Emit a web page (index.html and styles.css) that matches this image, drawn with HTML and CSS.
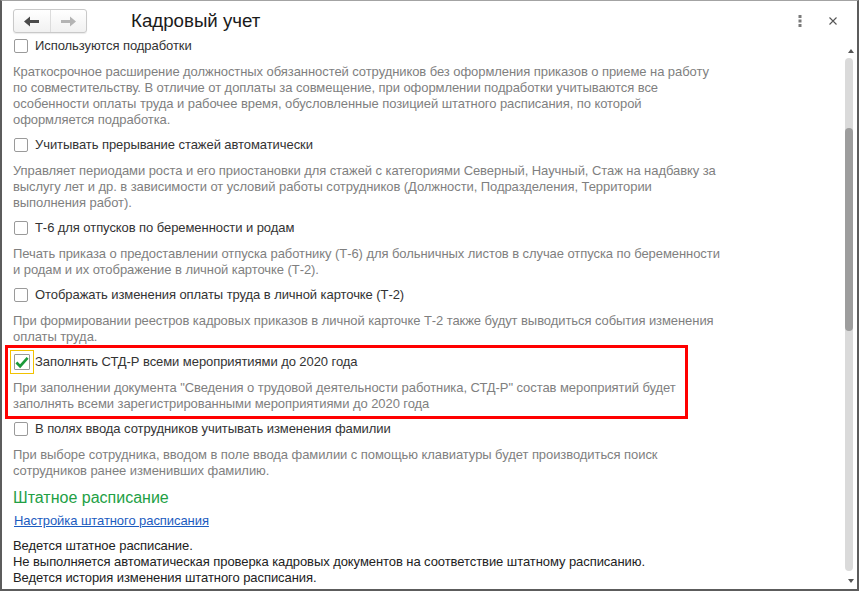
FILE: index.html
```html
<!DOCTYPE html>
<html lang="ru">
<head>
<meta charset="utf-8">
<title>Кадровый учет</title>
<link rel="stylesheet" href="styles.css">
</head>
<body>
<div class="window">
  <header class="titlebar">
    <div class="nav">
      <button class="nav-btn back" type="button" aria-label="Назад">
        <svg width="15" height="11" viewBox="0 0 15 11"><path d="M0 5.5 L6 0.5 V4 H15 V7 H6 V10.5 Z" fill="#4a4a4a"/></svg>
      </button>
      <button class="nav-btn fwd" type="button" aria-label="Вперед">
        <svg width="15" height="11" viewBox="0 0 15 11"><path d="M15 5.5 L9 0.5 V4 H0 V7 H9 V10.5 Z" fill="#b4b4b4"/></svg>
      </button>
    </div>
    <h1 class="title">Кадровый учет</h1>
    <div class="tools">
      <span class="more" aria-label="Еще">
        <svg width="4" height="12" viewBox="0 0 4 12"><rect x="0.5" y="0" width="3" height="3" fill="#7a7a7a"/><rect x="0.5" y="4.5" width="3" height="3" fill="#7a7a7a"/><rect x="0.5" y="9" width="3" height="3" fill="#7a7a7a"/></svg>
      </span>
      <span class="close" aria-label="Закрыть">
        <svg width="8" height="8" viewBox="0 0 8 8"><path d="M0.5 0.5 L7.5 7.5 M7.5 0.5 L0.5 7.5" stroke="#555" stroke-width="1.1"/></svg>
      </span>
    </div>
  </header>

  <div class="body">
    <div class="content">
      <section class="option">
        <label class="check-row"><span class="box"></span><span>Используются подработки</span></label>
        <p class="desc">Краткосрочное расширение должностных обязанностей сотрудников без оформления приказов о приеме на работу<br>по совместительству. В отличие от доплаты за совмещение, при оформлении подработки учитываются все<br>особенности оплаты труда и рабочее время, обусловленные позицией штатного расписания, по которой<br>оформляется подработка.</p>
      </section>

      <section class="option">
        <label class="check-row"><span class="box"></span><span>Учитывать прерывание стажей автоматически</span></label>
        <p class="desc">Управляет периодами роста и его приостановки для стажей с категориями Северный, Научный, Стаж на надбавку за<br>выслугу лет и др. в зависимости от условий работы сотрудников (Должности, Подразделения, Территории<br>выполнения работ).</p>
      </section>

      <section class="option">
        <label class="check-row"><span class="box"></span><span>Т-6 для отпусков по беременности и родам</span></label>
        <p class="desc">Печать приказа о предоставлении отпуска работнику (Т-6) для больничных листов в случае отпуска по беременности<br>и родам и их отображение в личной карточке (Т-2).</p>
      </section>

      <section class="option">
        <label class="check-row"><span class="box"></span><span>Отображать изменения оплаты труда в личной карточке (Т-2)</span></label>
        <p class="desc">При формировании реестров кадровых приказов в личной карточке Т-2 также будут выводиться события изменения<br>оплаты труда.</p>
      </section>

      <section class="option highlighted">
        <span class="annotation"></span>
        <label class="check-row"><span class="box checked focused"><svg width="15" height="13" viewBox="0 0 15 13"><path d="M1.5 6.5 L5.5 10.5 L13.5 1.5" fill="none" stroke="#1b9a3a" stroke-width="2.8"/></svg></span><span>Заполнять СТД-Р всеми мероприятиями до 2020 года</span></label>
        <p class="desc">При заполнении документа "Сведения о трудовой деятельности работника, СТД-Р" состав мероприятий будет<br>заполнять всеми зарегистрированными мероприятиями до 2020 года</p>
      </section>

      <section class="option">
        <label class="check-row"><span class="box"></span><span>В полях ввода сотрудников учитывать изменения фамилии</span></label>
        <p class="desc">При выборе сотрудника, вводом в поле ввода фамилии с помощью клавиатуры будет производиться поиск<br>сотрудников ранее изменивших фамилию.</p>
      </section>

      <h2 class="group-title">Штатное расписание</h2>
      <a class="link" href="#">Настройка штатного расписания</a>
      <p class="info">Ведется штатное расписание.<br>Не выполняется автоматическая проверка кадровых документов на соответствие штатному расписанию.<br>Ведется история изменения штатного расписания.<br>Используется несколько ставок в позиции штатного расписания.</p>
    </div>

    <div class="scrollbar">
      <span class="arrow up"></span>
      <div class="track"><div class="thumb"></div></div>
      <span class="arrow down"></span>
    </div>
  </div>
</div>
</body>
</html>
```

FILE: styles.css
```css
* { box-sizing: border-box; }

html, body {
  margin: 0;
  padding: 0;
  background: #ffffff;
}

body {
  font-family: "Liberation Sans", Arial, sans-serif;
  font-size: 13px;
  color: #333333;
}

.window {
  width: 859px;
  height: 591px;
  display: flex;
  flex-direction: column;
  background: #ffffff;
  border-top: 1px solid #a3a3a3;
  border-left: 2px solid #5c5c5c;
  border-right: 2px solid #5c5c5c;
  border-bottom: 2px solid #5c5c5c;
  overflow: hidden;
}

/* ---------- title bar ---------- */
.titlebar {
  height: 36px;
  flex: none;
  display: flex;
  align-items: flex-start;
  padding: 8px 0 0 11px;
}

.nav {
  display: flex;
  width: 74px;
  height: 24px;
  border: 1px solid #c9c9c9;
  border-radius: 3px;
  background: linear-gradient(#ffffff, #f1f1f1);
  box-shadow: 0 1px 1px rgba(0,0,0,0.08);
}

.nav-btn {
  flex: 1;
  margin: 0;
  padding: 0;
  border: none;
  background: transparent;
  display: flex;
  align-items: center;
  justify-content: center;
}

.nav-btn.back {
  border-right: 1px solid #dcdcdc;
}

.title {
  margin: 0 0 0 44px;
  font-family: "Liberation Sans", Arial, sans-serif;
  font-size: 18.7px;
  font-weight: normal;
  line-height: 24px;
  color: #1a1a1a;
}

.tools {
  margin-left: auto;
  display: flex;
  align-items: center;
  height: 24px;
  padding-right: 20px;
}

.more {
  display: flex;
  margin-right: 27px;
}

.close {
  display: flex;
}

/* ---------- body ---------- */
.body {
  flex: 1;
  display: flex;
  min-height: 0;
}

.content {
  flex: 1;
  overflow: hidden;
  padding: 1px 0 0 11px;
  letter-spacing: -0.07px;
}

.option {
  position: relative;
  margin-bottom: 9px;
}

.check-row {
  display: flex;
  align-items: center;
  height: 16px;
  line-height: 16px;
  color: #333333;
}

.box {
  width: 14px;
  height: 14px;
  margin: 0 7px 0 1px;
  border: 1px solid #9a9a9a;
  border-radius: 2px;
  background: #ffffff;
  flex: none;
  position: relative;
  display: flex;
  align-items: center;
  justify-content: center;
}

.box.checked {
  width: 16px;
  height: 16px;
  margin-right: 5px;
  border-radius: 1px;
}

.box.focused::after {
  content: "";
  position: absolute;
  left: -5px;
  top: -5px;
  right: -5px;
  bottom: -5px;
  border: 1px solid #f2c200;
}

.desc {
  margin: 10px 0 0 0;
  line-height: 16px;
  color: #7f7f7f;
  white-space: nowrap;
}

.annotation {
  position: absolute;
  left: -8px;
  top: -9px;
  width: 683px;
  height: 74px;
  border: 3px solid #ff0000;
  pointer-events: none;
}

.group-title {
  margin: 0;
  font-size: 16px;
  font-weight: normal;
  line-height: 20px;
  color: #22a045;
  letter-spacing: 0;
}

.link {
  display: inline-block;
  margin: 5px 0 0 1px;
  line-height: 16px;
  color: #1c5cc0;
  text-decoration: underline;
}

.info {
  margin: 9px 0 0 0;
  line-height: 16px;
  color: #222222;
  white-space: nowrap;
}

/* ---------- scrollbar ---------- */
.scrollbar {
  width: 12px;
  flex: none;
  display: flex;
  flex-direction: column;
  align-items: flex-start;
  padding: 12px 0 0 0;
}

.arrow {
  width: 0;
  height: 0;
  margin-left: 3px;
  border-left: 3px solid transparent;
  border-right: 3px solid transparent;
}

.arrow.up {
  border-bottom: 4px solid #555555;
}

.arrow.down {
  border-top: 4px solid #555555;
  margin-bottom: 6px;
}

.track {
  flex: 1;
  width: 8px;
  margin: 5px 0 8px 0;
  border-radius: 4px;
  background: #dadada;
  padding-top: 70px;
}

.thumb {
  width: 8px;
  height: 203px;
  border-radius: 4px;
  background: #9d9d9d;
}
```
